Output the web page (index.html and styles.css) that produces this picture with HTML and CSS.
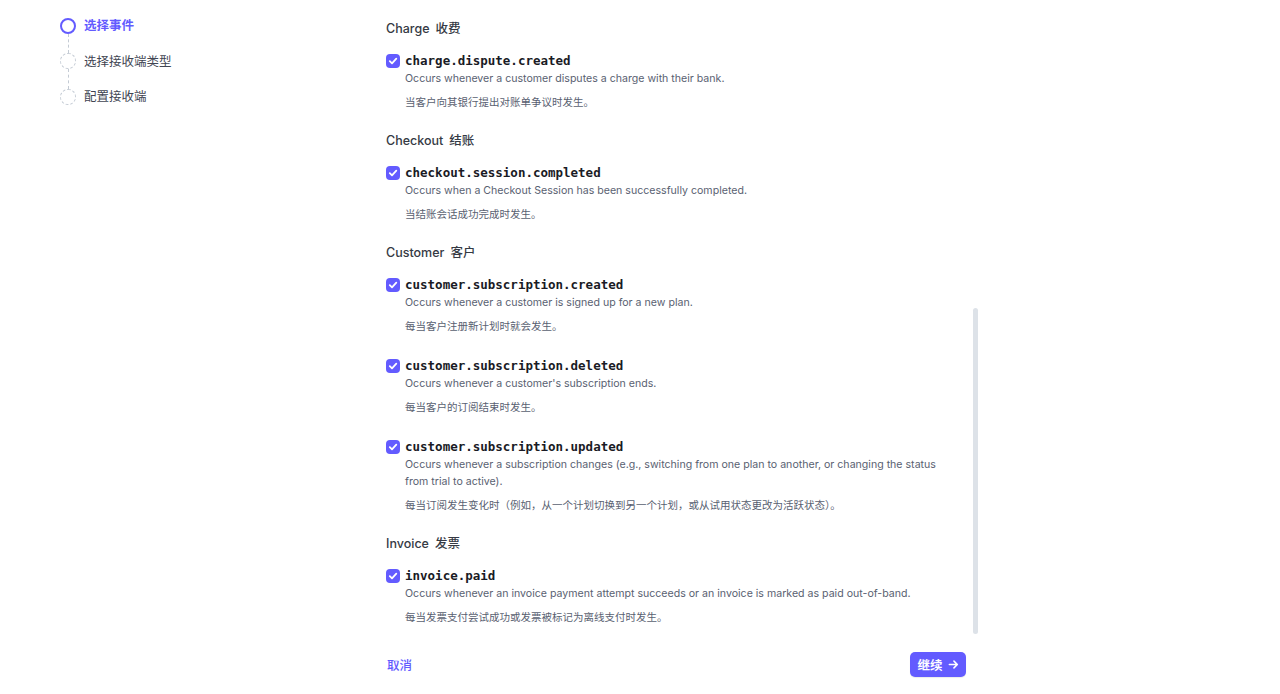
FILE: index.html
```html
<!DOCTYPE html>
<html lang="zh">
<head>
<meta charset="utf-8">
<title>选择事件</title>
<link rel="stylesheet" href="styles.css">
</head>
<body>
<div class="page">
  <aside class="sidebar">
    <div class="step active"><span class="dot"></span><span class="label">选择事件</span></div>
    <div class="connector"></div>
    <div class="step"><span class="dot"></span><span class="label">选择接收端类型</span></div>
    <div class="connector"></div>
    <div class="step"><span class="dot"></span><span class="label">配置接收端</span></div>
  </aside>

  <main class="main">
    <div class="scroll">
      <section class="group">
        <h3 class="group-title"><span>Charge</span><span>收费</span></h3>
        <div class="item">
          <span class="check"><svg viewBox="0 0 14 14" width="14" height="14"><path d="M3.8 7.2 6 9.3l4.3-4.6" fill="none" stroke="#fff" stroke-width="1.8" stroke-linecap="round" stroke-linejoin="round"/></svg></span>
          <div class="body">
            <div class="code">charge.dispute.created</div>
            <p class="desc">Occurs whenever a customer disputes a charge with their bank.</p>
            <p class="zh">当客户向其银行提出对账单争议时发生。</p>
          </div>
        </div>
      </section>

      <section class="group">
        <h3 class="group-title"><span>Checkout</span><span>结账</span></h3>
        <div class="item">
          <span class="check"><svg viewBox="0 0 14 14" width="14" height="14"><path d="M3.8 7.2 6 9.3l4.3-4.6" fill="none" stroke="#fff" stroke-width="1.8" stroke-linecap="round" stroke-linejoin="round"/></svg></span>
          <div class="body">
            <div class="code">checkout.session.completed</div>
            <p class="desc">Occurs when a Checkout Session has been successfully completed.</p>
            <p class="zh">当结账会话成功完成时发生。</p>
          </div>
        </div>
      </section>

      <section class="group">
        <h3 class="group-title"><span>Customer</span><span>客户</span></h3>
        <div class="item">
          <span class="check"><svg viewBox="0 0 14 14" width="14" height="14"><path d="M3.8 7.2 6 9.3l4.3-4.6" fill="none" stroke="#fff" stroke-width="1.8" stroke-linecap="round" stroke-linejoin="round"/></svg></span>
          <div class="body">
            <div class="code">customer.subscription.created</div>
            <p class="desc">Occurs whenever a customer is signed up for a new plan.</p>
            <p class="zh">每当客户注册新计划时就会发生。</p>
          </div>
        </div>
        <div class="item">
          <span class="check"><svg viewBox="0 0 14 14" width="14" height="14"><path d="M3.8 7.2 6 9.3l4.3-4.6" fill="none" stroke="#fff" stroke-width="1.8" stroke-linecap="round" stroke-linejoin="round"/></svg></span>
          <div class="body">
            <div class="code">customer.subscription.deleted</div>
            <p class="desc">Occurs whenever a customer's subscription ends.</p>
            <p class="zh">每当客户的订阅结束时发生。</p>
          </div>
        </div>
        <div class="item">
          <span class="check"><svg viewBox="0 0 14 14" width="14" height="14"><path d="M3.8 7.2 6 9.3l4.3-4.6" fill="none" stroke="#fff" stroke-width="1.8" stroke-linecap="round" stroke-linejoin="round"/></svg></span>
          <div class="body">
            <div class="code">customer.subscription.updated</div>
            <p class="desc">Occurs whenever a subscription changes (e.g., switching from one plan to another, or changing the status from trial to active).</p>
            <p class="zh">每当订阅发生变化时（例如，从一个计划切换到另一个计划，或从试用状态更改为活跃状态）。</p>
          </div>
        </div>
      </section>

      <section class="group">
        <h3 class="group-title"><span>Invoice</span><span>发票</span></h3>
        <div class="item">
          <span class="check"><svg viewBox="0 0 14 14" width="14" height="14"><path d="M3.8 7.2 6 9.3l4.3-4.6" fill="none" stroke="#fff" stroke-width="1.8" stroke-linecap="round" stroke-linejoin="round"/></svg></span>
          <div class="body">
            <div class="code">invoice.paid</div>
            <p class="desc">Occurs whenever an invoice payment attempt succeeds or an invoice is marked as paid out-of-band.</p>
            <p class="zh">每当发票支付尝试成功或发票被标记为离线支付时发生。</p>
          </div>
        </div>
      </section>

      <div class="scrollbar"></div>
    </div>

    <footer class="footer">
      <button class="btn-cancel" type="button">取消</button>
      <button class="btn-next" type="button">继续<svg viewBox="0 0 12 12" width="11" height="11"><path d="M1.5 6h8.5M6.5 2.3 10.2 6 6.5 9.7" fill="none" stroke="#fff" stroke-width="1.7" stroke-linecap="round" stroke-linejoin="round"/></svg></button>
    </footer>
  </main>
</div>
</body>
</html>
```

FILE: styles.css
```css
* { box-sizing: border-box; }

html, body {
  margin: 0;
  padding: 0;
  background: #ffffff;
}

body {
  font-family: Inter, "Noto Sans CJK SC", sans-serif;
  color: #353a44;
  -webkit-font-smoothing: antialiased;
}

.page {
  display: flex;
  height: 694px;
}

/* ---------- Sidebar stepper ---------- */
.sidebar {
  width: 386px;
  padding: 17.5px 0 0 60px;
  display: flex;
  flex-direction: column;
}

.step {
  display: flex;
  align-items: center;
  gap: 8px;
  height: 16px;
}

.dot {
  width: 16px;
  height: 16px;
  border-radius: 50%;
  border: 1.5px dashed #c4cbd4;
  flex: none;
}

.step.active .dot {
  border: 2.5px solid #635bff;
}

.label {
  font-size: 12.5px;
  line-height: 16px;
  padding-top: 1px;
  color: #414552;
  font-weight: 400;
}

.step.active .label {
  color: #635bff;
  font-weight: 600;
}

.connector {
  height: 19.5px;
  width: 0;
  margin-left: 7.5px;
  border-left: 1px dashed #c4cbd4;
}

/* ---------- Main ---------- */
.main {
  width: 594px;
  display: flex;
  flex-direction: column;
}

.scroll {
  position: relative;
  height: 642px;
  overflow: hidden;
  padding: 19px 14px 0 0;
  display: flex;
  flex-direction: column;
  gap: 20px;
}

.group {
  display: flex;
  flex-direction: column;
  gap: 22px;
}

.group-title {
  margin: 0 0 -9px 0;
  display: flex;
  gap: 6px;
  font-size: 12.5px;
  line-height: 20px;
  font-weight: 500;
  color: #353a44;
}

.item {
  display: flex;
  gap: 5px;
  align-items: flex-start;
}

.check {
  flex: none;
  width: 14px;
  height: 14px;
  margin-top: 2px;
  border-radius: 4px;
  background: #635bff;
  display: flex;
}

.body {
  width: 550px;
}

.code {
  font-family: "DejaVu Sans Mono", "Liberation Mono", monospace;
  font-weight: 700;
  font-size: 12.5px;
  line-height: 17px;
  color: #1a1b25;
}

.desc {
  margin: 1px 0 0 0;
  font-size: 10.6px;
  line-height: 17px;
  color: #596171;
}

.zh {
  margin: 7px 0 0 0;
  font-size: 10.5px;
  line-height: 17px;
  color: #596171;
}

.scrollbar {
  position: absolute;
  left: 587px;
  top: 308px;
  width: 5px;
  height: 326px;
  border-radius: 3px;
  background: #dde2e8;
}

/* ---------- Footer ---------- */
.footer {
  height: 45px;
  padding-right: 14px;
  display: flex;
  align-items: center;
  justify-content: space-between;
}

.btn-cancel {
  border: 0;
  background: none;
  padding: 0 0 0 1px;
  font-family: Inter, "Noto Sans CJK SC", sans-serif;
  font-size: 12.5px;
  font-weight: 500;
  color: #635bff;
  cursor: pointer;
}

.btn-next {
  width: 56px;
  height: 25px;
  border: 0;
  border-radius: 5px;
  background: #635bff;
  color: #ffffff;
  font-family: Inter, "Noto Sans CJK SC", sans-serif;
  font-size: 12.5px;
  font-weight: 700;
  display: flex;
  align-items: center;
  justify-content: center;
  gap: 5px;
  padding: 0;
  cursor: pointer;
  box-shadow: 0 1px 1px rgba(0, 0, 0, 0.08);
}
```
